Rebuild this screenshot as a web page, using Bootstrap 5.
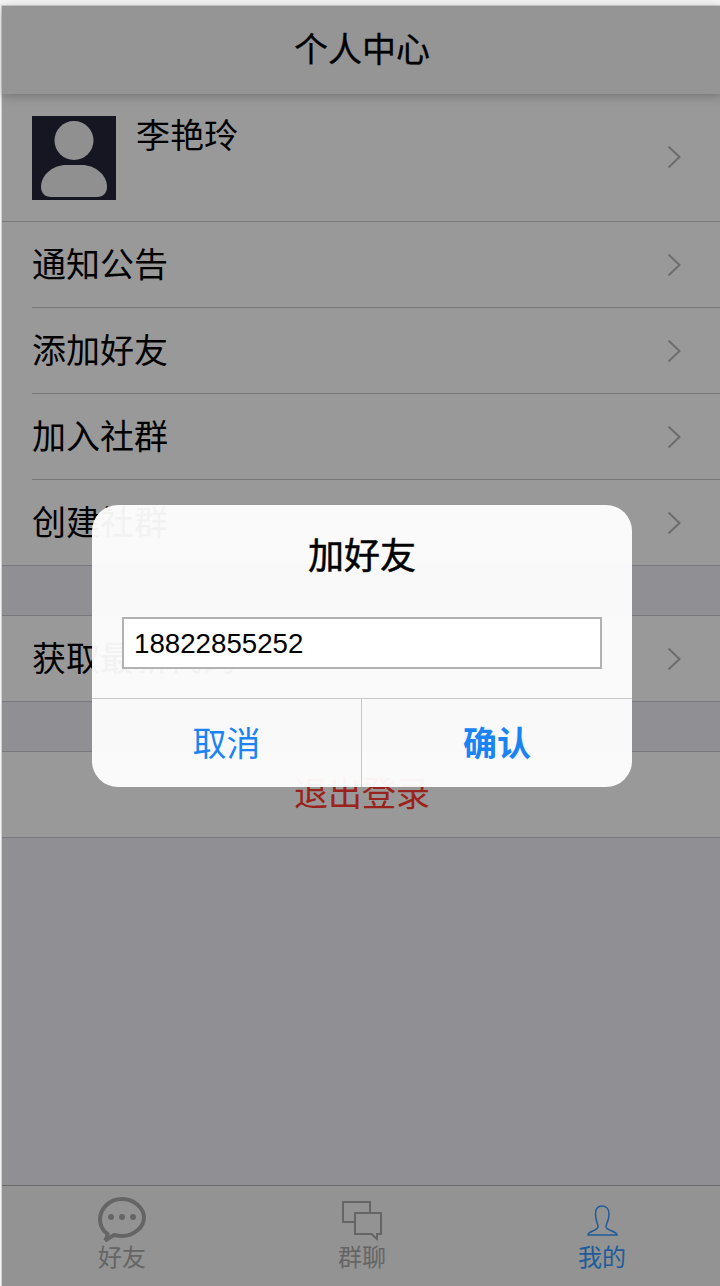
<!DOCTYPE html>
<html lang="zh-CN">
<head>
    <meta charset="UTF-8">
    <title>个人中心</title>
    <link href="https://cdn.jsdelivr.net/npm/bootstrap@5.3.0/dist/css/bootstrap.min.css" rel="stylesheet">
    <style>
      html, body { height: 100%; }
      body { background: #f4f4f4; font-family: "Liberation Sans", "Noto Sans CJK SC", sans-serif; overflow: hidden; }
      .phone-frame { margin: 6px 0 0 2px; width: 720px; height: 1280px; background: #f0eff6; position: relative; box-shadow: 0 0 0 1px #d0d0d0; }
      .top-title { height: 88px; background: #f8f8f8; font-size: 34px; line-height: 88px; text-align: center; color: #000; box-shadow: 0 2px 10px rgba(0,0,0,.25); position: relative; z-index: 1; -webkit-text-stroke: .3px #000; }
      .menu-list { --bs-list-group-border-width: 0; --bs-list-group-border-radius: 0; --bs-list-group-item-padding-x: 0; --bs-list-group-item-padding-y: 0; border-bottom: 1px solid #c8c7cc; }
      .menu-list .list-group-item { padding-left: 30px; font-size: 34px; color: #000; background: #fff; }
      .menu-inner { height: 86px; border-bottom: 1px solid #c8c7cc; padding-right: 41px; }
      .menu-inner span { margin-top: 2px; }
      .list-group-item:last-child .menu-inner { height: 85px; border-bottom: 0; }
      .menu-spacer { height: 49px; }
      .top-line { border-top: 1px solid #c8c7cc; }
      .profile-row { height: 128px; border-bottom: 1px solid #c8c7cc; padding: 22px 41px 0 30px; background: #fff; }
      .profile-name { font-size: 34px; line-height: 40px; margin-left: 20px; color: #000; }
      .profile-arrow { margin-top: 29px; }
      .logout-text { color: #ff3b30; text-align: center; line-height: 85px; padding-right: 30px; }
      .chevron { width: 14px; height: 24px; flex: none; }
      .tab-strip { position: absolute; left: 0; right: 0; bottom: 0; height: 101px; background: #f6f6f6; border-top: 1px solid #b2b2b2; }
      .tab-cell { height: 100px; color: #a8a8a8; font-size: 24px; line-height: 26px; padding-top: 9px; }
      .tab-cell.active-tab { color: #3399ff; }
      .tab-cell svg { display: block; margin: -1px auto 1px; width: 60px; height: 50px; }
      .dim-layer { position: absolute; inset: 0; background: rgba(0,0,0,.4); z-index: 5; }
      .prompt-box { width: 540px; height: 282px; background: rgba(255,255,255,.95); border-radius: 26px; overflow: hidden; }
      .prompt-title { font-size: 36px; line-height: 40px; padding-top: 32px; text-align: center; color: #000; -webkit-text-stroke: .5px #000; }
      .prompt-input { display: block; margin: 40px 30px 0; width: 480px; height: 52px; border: 2px solid #b2b2b2; background: #fff; font-size: 27.7px; padding: 1px 10px 0; border-radius: 0; color: #000; outline: 0; }
      .prompt-actions { margin-top: 29px; border-top: 1px solid #c8c8c8; height: 89px; }
      .prompt-btn { flex: 1 1 0; border: 0; border-radius: 0; background: transparent; font-size: 34px; color: #1a84f4; padding: 2px 0 0; }
      .prompt-btn:hover { background: transparent; color: #1a84f4; }
      .prompt-btn:first-child { flex: 0 0 269px; }
      .prompt-btn + .prompt-btn { border-left: 1px solid #c8c8c8; font-weight: 700; }
    </style>
</head>
<body>
    <div class="phone-frame">
        <div class="top-title">个人中心</div>

        <div class="profile-row d-flex">
            <svg width="84" height="84" viewBox="0 0 84 84" class="flex-shrink-0">
                <rect width="84" height="84" fill="#26263a"/>
                <circle cx="42" cy="24.500" r="19.500" fill="#f0f0f2"/>
                <path d="M9 71C9 58 22 49 34 49H50C62 49 75 58 75 71C75 77 71 81 65 81H19C13 81 9 77 9 71Z" fill="#f0f0f2"/>
            </svg>
            <div class="profile-name flex-grow-1">李艳玲</div>
            <svg class="chevron profile-arrow" viewBox="0 0 14 24"><path d="M1.5 1.5 12.5 12 1.5 22.5" fill="none" stroke="#b5b5b5" stroke-width="2"/></svg>
        </div>

        <div class="list-group menu-list">
            <div class="list-group-item"><div class="menu-inner d-flex align-items-center justify-content-between"><span>通知公告</span><svg class="chevron" viewBox="0 0 14 24"><path d="M1.5 1.5 12.5 12 1.5 22.5" fill="none" stroke="#b5b5b5" stroke-width="2"/></svg></div></div>
            <div class="list-group-item"><div class="menu-inner d-flex align-items-center justify-content-between"><span>添加好友</span><svg class="chevron" viewBox="0 0 14 24"><path d="M1.5 1.5 12.5 12 1.5 22.5" fill="none" stroke="#b5b5b5" stroke-width="2"/></svg></div></div>
            <div class="list-group-item"><div class="menu-inner d-flex align-items-center justify-content-between"><span>加入社群</span><svg class="chevron" viewBox="0 0 14 24"><path d="M1.5 1.5 12.5 12 1.5 22.5" fill="none" stroke="#b5b5b5" stroke-width="2"/></svg></div></div>
            <div class="list-group-item"><div class="menu-inner d-flex align-items-center justify-content-between"><span>创建社群</span><svg class="chevron" viewBox="0 0 14 24"><path d="M1.5 1.5 12.5 12 1.5 22.5" fill="none" stroke="#b5b5b5" stroke-width="2"/></svg></div></div>
        </div>

        <div class="menu-spacer"></div>

        <div class="list-group menu-list top-line">
            <div class="list-group-item"><div class="menu-inner d-flex align-items-center justify-content-between"><span>获取最新代码</span><svg class="chevron" viewBox="0 0 14 24"><path d="M1.5 1.5 12.5 12 1.5 22.5" fill="none" stroke="#b5b5b5" stroke-width="2"/></svg></div></div>
        </div>

        <div class="menu-spacer"></div>

        <div class="list-group menu-list top-line">
            <div class="list-group-item"><div class="menu-inner logout-text">退出登录</div></div>
        </div>

        <div class="tab-strip row g-0">
            <div class="col-4 tab-cell text-center">
                <svg viewBox="0 0 60 50">
                    <path d="M15.5 40C9.5 35.500 8 30.500 8 25.500 8 14 18 5 30 5S52 14 52 23.500 42 42 30 42C27 42 24.500 41.500 22 41L13 46.500C14.500 44.500 15.500 42.500 15.500 40Z" fill="none" stroke="#a8a8a8" stroke-width="4"/>
                    <circle cx="19" cy="23" r="3" fill="#a8a8a8"/><circle cx="30" cy="23" r="3" fill="#a8a8a8"/><circle cx="41" cy="23" r="3" fill="#a8a8a8"/>
                </svg>
                好友
            </div>
            <div class="col-4 tab-cell text-center">
                <svg viewBox="0 0 60 50">
                    <path d="M24 28H11V8H38V19" fill="none" stroke="#a8a8a8" stroke-width="2"/>
                    <path d="M23 19H49V40H45V45L39.500 40H23Z" fill="none" stroke="#a8a8a8" stroke-width="2"/>
                </svg>
                群聊
            </div>
            <div class="col-4 tab-cell text-center active-tab">
                <svg viewBox="0 0 60 50">
                    <path d="M16 41C16 37 26 37 26 32.500C26 30 23.500 27 23.500 20C23.500 15 26 12 30 12S37 15 37 20C37 27 34 30 34 32.500C34 37 45 37 45 41Z" fill="none" stroke="#3399ff" stroke-width="1.500"/>
                </svg>
                我的
            </div>
        </div>

        <div class="dim-layer d-flex align-items-center justify-content-center">
            <div class="prompt-box">
                <div class="prompt-title">加好友</div>
                <input class="prompt-input" type="text" value="18822855252">
                <div class="prompt-actions d-flex">
                    <button class="btn prompt-btn">取消</button>
                    <button class="btn prompt-btn">确认</button>
                </div>
            </div>
        </div>
    </div>
    <script src="https://cdn.jsdelivr.net/npm/bootstrap@5.3.0/dist/js/bootstrap.bundle.min.js"></script>
</body>
</html>
